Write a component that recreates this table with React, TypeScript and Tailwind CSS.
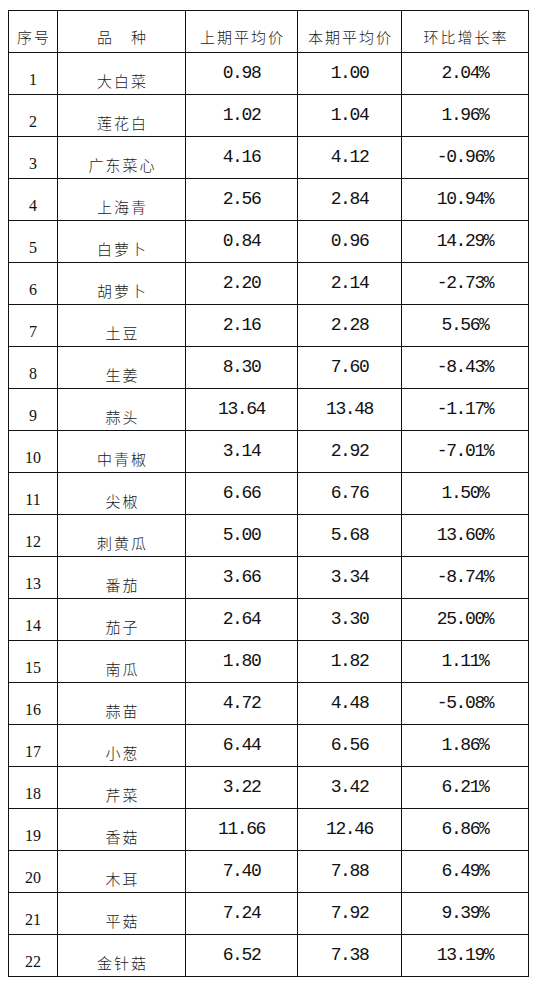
const rows: [string, string, string, string][] = [
  ["大白菜", "0.98", "1.00", "2.04%"],
  ["莲花白", "1.02", "1.04", "1.96%"],
  ["广东菜心", "4.16", "4.12", "-0.96%"],
  ["上海青", "2.56", "2.84", "10.94%"],
  ["白萝卜", "0.84", "0.96", "14.29%"],
  ["胡萝卜", "2.20", "2.14", "-2.73%"],
  ["土豆", "2.16", "2.28", "5.56%"],
  ["生姜", "8.30", "7.60", "-8.43%"],
  ["蒜头", "13.64", "13.48", "-1.17%"],
  ["中青椒", "3.14", "2.92", "-7.01%"],
  ["尖椒", "6.66", "6.76", "1.50%"],
  ["刺黄瓜", "5.00", "5.68", "13.60%"],
  ["番茄", "3.66", "3.34", "-8.74%"],
  ["茄子", "2.64", "3.30", "25.00%"],
  ["南瓜", "1.80", "1.82", "1.11%"],
  ["蒜苗", "4.72", "4.48", "-5.08%"],
  ["小葱", "6.44", "6.56", "1.86%"],
  ["芹菜", "3.22", "3.42", "6.21%"],
  ["香菇", "11.66", "12.46", "6.86%"],
  ["木耳", "7.40", "7.88", "6.49%"],
  ["平菇", "7.24", "7.92", "9.39%"],
  ["金针菇", "6.52", "7.38", "13.19%"],
];

const headers = ["序号", "品　种", "上期平均价", "本期平均价", "环比增长率"];

const cell = "h-[42px] border-r border-b border-[#111] flex justify-center items-center";
const cjk = "font-['Noto_Sans_CJK_SC',sans-serif] font-light text-[15px] tracking-[2px] pl-[2px] text-[#1a1a1a]";
const mono = "font-['Liberation_Mono',monospace] text-[18px] tracking-[-1.4px]";

export default function App() {
  return (
    <div className="w-[539px] h-[985px] bg-white text-[#111] pt-[10px] pl-[8px]">
      <div className="grid grid-cols-[49px_128px_112px_104px_127px] w-[521px] border-l border-t border-[#111]">
        {headers.map((h) => (
          <div key={h} className={`${cell} ${cjk} pt-[11px]`}>
            {h}
          </div>
        ))}
        {rows.map((r, i) => (
          <div key={r[0]} className="contents">
            <div className={`${cell} font-['Liberation_Serif',serif] text-[16px] pt-[13px]`}>{i + 1}</div>
            <div className={`${cell} ${cjk} pt-[15px]`}>{r[0]}</div>
            <div className={`${cell} ${mono}`}>{r[1]}</div>
            <div className={`${cell} ${mono}`}>{r[2]}</div>
            <div className={`${cell} ${mono}`}>{r[3]}</div>
          </div>
        ))}
      </div>
    </div>
  );
}
